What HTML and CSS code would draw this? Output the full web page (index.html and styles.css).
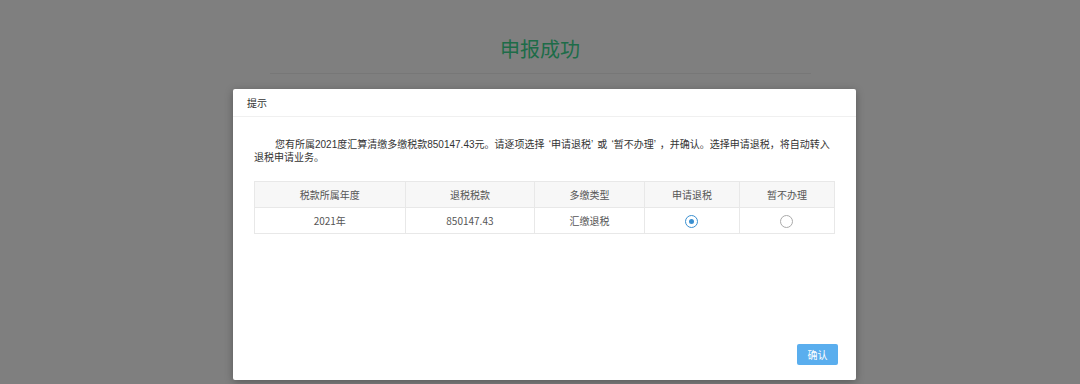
FILE: index.html
```html
<!DOCTYPE html>
<html lang="zh-CN">
<head>
<meta charset="utf-8">
<title>申报成功</title>
<link rel="stylesheet" href="styles.css">
</head>
<body>
<div class="page">
  <h1 class="title">申报成功</h1>
  <div class="divider"></div>
</div>
<div class="mask"></div>
<div class="modal">
  <div class="modal-header">提示</div>
  <div class="modal-body">
    <p class="msg">您有所属2021度汇算清缴多缴税款850147.43元。请逐项选择 ‘申请退税’ 或 ‘暂不办理’ ，并确认。选择申请退税，将自动转入退税申请业务。</p>
    <table class="grid">
      <thead>
        <tr><th class="c1">税款所属年度</th><th class="c2">退税税款</th><th class="c3">多缴类型</th><th class="c4">申请退税</th><th class="c5">暂不办理</th></tr>
      </thead>
      <tbody>
        <tr><td>2021年</td><td>850147.43</td><td>汇缴退税</td><td><span class="radio checked"></span></td><td><span class="radio"></span></td></tr>
      </tbody>
    </table>
  </div>
  <div class="modal-footer"><button class="btn">确认</button></div>
</div>
</body>
</html>
```
FILE: styles.css
```css
html, body {
  margin: 0;
  padding: 0;
}
body {
  width: 1080px;
  height: 384px;
  overflow: hidden;
  background: #ffffff;
  font-family: "Noto Sans CJK SC", "Noto Sans", sans-serif;
  position: relative;
}
.page {
  padding-top: 36px;
  display: flex;
  flex-direction: column;
  align-items: center;
}
.title {
  margin: 0;
  font-size: 20px;
  font-weight: normal;
  line-height: 26px;
  color: #3cd890;
}
.divider {
  margin-top: 11px;
  width: 541px;
  height: 1px;
  background: #eeeeee;
}
.mask {
  position: absolute;
  inset: 0;
  background: rgba(0, 0, 0, 0.5);
}
.modal {
  position: absolute;
  left: 233px;
  top: 89px;
  width: 623px;
  height: 291px;
  background: #fff;
  border-radius: 2px;
  box-shadow: 0 2px 8px rgba(0, 0, 0, 0.3);
  display: flex;
  flex-direction: column;
}
.modal-header {
  height: 27px;
  line-height: 27px;
  padding-left: 14px;
  font-size: 10px;
  color: #333;
  border-bottom: 1px solid #f0f0f0;
}
.modal-body {
  padding: 21px 21px 0 21px;
  flex: 1;
}
.msg {
  margin: 0;
  font-family: "Liberation Sans", "Noto Sans CJK SC", sans-serif;
  font-size: 10px;
  line-height: 13px;
  color: #333;
  text-indent: 21px;
  word-spacing: 1.5px;
}
.grid {
  margin-top: 17px;
  width: 581px;
  border-collapse: collapse;
  table-layout: fixed;
  font-size: 10px;
  color: #555;
}
.grid th, .grid td {
  border: 1px solid #e8e8e8;
  height: 25px;
  padding: 0;
  text-align: center;
  font-weight: normal;
}
.grid th {
  background: #f7f7f7;
}
.c1 { width: 26%; }
.c2 { width: 22.4%; }
.c3 { width: 18.9%; }
.c4 { width: 16.35%; }
.c5 { width: 16.35%; }
.radio {
  display: inline-block;
  width: 11px;
  height: 11px;
  border: 1px solid #aaa;
  border-radius: 50%;
  vertical-align: middle;
  position: relative;
  box-sizing: content-box;
}
.radio.checked {
  border-color: #3a8fd0;
}
.radio.checked::after {
  content: "";
  position: absolute;
  left: 3px;
  top: 3px;
  width: 5px;
  height: 5px;
  border-radius: 50%;
  background: #3a8fd0;
}
.modal-footer {
  display: flex;
  justify-content: flex-end;
  padding: 0 18px 15px 0;
}
.btn {
  width: 41px;
  height: 21px;
  border: none;
  border-radius: 2px;
  background: #5aaeee;
  color: #fff;
  font-size: 10px;
  font-family: "Noto Sans CJK SC", sans-serif;
  padding: 0;
}
```
